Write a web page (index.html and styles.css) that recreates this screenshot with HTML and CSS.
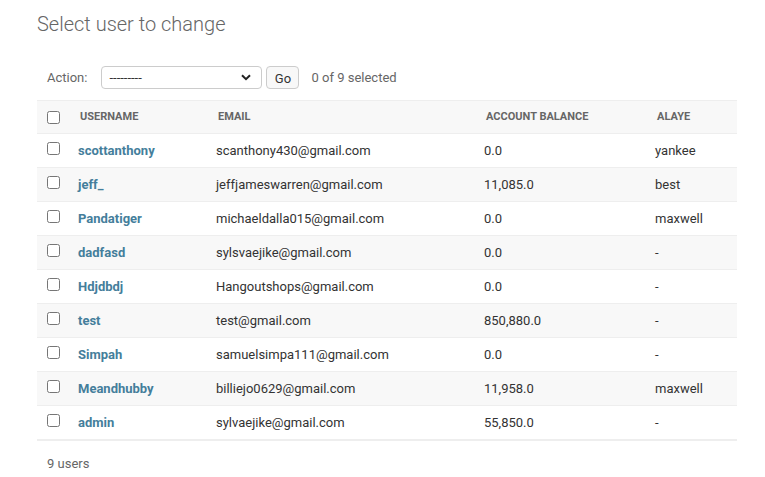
FILE: index.html
```html
<!DOCTYPE html>
<html>
<head>
<meta charset="utf-8">
<link rel="stylesheet" href="styles.css">
</head>
<body>
<div class="content">
  <h1 class="title">Select user to change</h1>
  <div class="actions">
    <label class="action-label">Action:</label>
    <div class="select-wrap">
      <select class="select"><option>---------</option></select>
      <svg class="chev" width="10" height="7" viewBox="0 0 10 7"><path d="M1 1.2 L5 5.2 L9 1.2" fill="none" stroke="#222" stroke-width="2"/></svg>
    </div>
    <button class="go">Go</button>
    <span class="counter">0 of 9 selected</span>
  </div>
  <table class="result">
    <thead>
      <tr>
        <th class="c-check"><input type="checkbox" class="cb"></th>
        <th class="c-user">Username</th>
        <th class="c-email">Email</th>
        <th class="c-bal">Account balance</th>
        <th class="c-alaye">Alaye</th>
      </tr>
    </thead>
    <tbody>
      <tr><td class="c-check"><input type="checkbox" class="cb cb-row"></td><th class="c-user"><a href="#">scottanthony</a></th><td>scanthony430@gmail.com</td><td>0.0</td><td>yankee</td></tr>
      <tr><td class="c-check"><input type="checkbox" class="cb cb-row"></td><th class="c-user"><a href="#">jeff_</a></th><td>jeffjameswarren@gmail.com</td><td>11,085.0</td><td>best</td></tr>
      <tr><td class="c-check"><input type="checkbox" class="cb cb-row"></td><th class="c-user"><a href="#">Pandatiger</a></th><td>michaeldalla015@gmail.com</td><td>0.0</td><td>maxwell</td></tr>
      <tr><td class="c-check"><input type="checkbox" class="cb cb-row"></td><th class="c-user"><a href="#">dadfasd</a></th><td>sylsvaejike@gmail.com</td><td>0.0</td><td>-</td></tr>
      <tr><td class="c-check"><input type="checkbox" class="cb cb-row"></td><th class="c-user"><a href="#">Hdjdbdj</a></th><td>Hangoutshops@gmail.com</td><td>0.0</td><td>-</td></tr>
      <tr><td class="c-check"><input type="checkbox" class="cb cb-row"></td><th class="c-user"><a href="#">test</a></th><td>test@gmail.com</td><td>850,880.0</td><td>-</td></tr>
      <tr><td class="c-check"><input type="checkbox" class="cb cb-row"></td><th class="c-user"><a href="#">Simpah</a></th><td>samuelsimpa111@gmail.com</td><td>0.0</td><td>-</td></tr>
      <tr><td class="c-check"><input type="checkbox" class="cb cb-row"></td><th class="c-user"><a href="#">Meandhubby</a></th><td>billiejo0629@gmail.com</td><td>11,958.0</td><td>maxwell</td></tr>
      <tr><td class="c-check"><input type="checkbox" class="cb cb-row"></td><th class="c-user"><a href="#">admin</a></th><td>sylvaejike@gmail.com</td><td>55,850.0</td><td>-</td></tr>
    </tbody>
  </table>
  <p class="paginator">9 users</p>
</div>
</body>
</html>
```

FILE: styles.css
```css
html, body {
  margin: 0;
  padding: 0;
  background: #fff;
}
body {
  font-family: Roboto, "Liberation Sans", Arial, sans-serif;
  color: #333;
  font-size: 13px;
}
.content {
  padding: 12px 28px 0 37px;
  width: 700px;
}
.title {
  margin: 0;
  font-size: 20px;
  font-weight: 300;
  color: #666;
  line-height: 24px;
}
.actions {
  display: flex;
  align-items: center;
  margin-top: 30px;
  padding-left: 10px;
  height: 23px;
}
.action-label {
  color: #666;
  font-size: 13px;
  margin-right: 14px;
}
.select-wrap {
  position: relative;
  width: 161px;
  height: 23px;
}
.select {
  appearance: none;
  -webkit-appearance: none;
  width: 161px;
  height: 23px;
  border: 1px solid #ccc;
  border-radius: 4px;
  background: #fff;
  font-family: Roboto, "Liberation Sans", Arial, sans-serif;
  font-size: 13px;
  color: #333;
  padding: 0 7px;
  margin: 0;
  box-sizing: border-box;
}
.chev {
  position: absolute;
  right: 11px;
  top: 8px;
  pointer-events: none;
}
.go {
  margin-left: 4px;
  height: 23px;
  width: 33px;
  box-sizing: border-box;
  border: 1px solid #ccc;
  border-radius: 4px;
  background: #f8f8f8;
  font-family: Roboto, "Liberation Sans", Arial, sans-serif;
  font-size: 13px;
  color: #333;
  padding: 2px 0 0;
}
.counter {
  margin-left: 12px;
  color: #666;
  font-size: 13px;
}
.result {
  margin-top: 11px;
  border-collapse: collapse;
  width: 700px;
  table-layout: fixed;
}
.result th, .result td {
  padding: 8px;
  line-height: 17px;
  text-align: left;
  vertical-align: middle;
  border-bottom: 1px solid #eee;
  font-size: 13px;
  white-space: nowrap;
}
.result thead th {
  background: #f8f8f8;
  border-top: 1px solid #eee;
  border-bottom: 1px solid #eee;
  font-size: 11px;
  font-weight: 700;
  text-transform: uppercase;
  color: #666;
  line-height: 16px;
  padding-left: 10px;
  padding-right: 6px;
}
.result tbody th {
  font-weight: 700;
}
.result tbody tr:nth-child(even) {
  background: #f8f8f8;
}
.result a {
  color: #447e9b;
  text-decoration: none;
}
.result .c-check,
.result thead .c-check {
  width: 23px;
  padding: 0 0 0 10px;
}
.result .c-user { width: 122px; }
.result .c-email { width: 252px; }
.result .c-bal { width: 155px; }
.result .c-alaye { width: auto; }
.cb {
  margin: 0;
  width: 13px;
  height: 13px;
  display: block;
}
.cb-row {
  margin-top: -4px;
}
.paginator {
  margin: 0;
  border-top: 1px solid #eee;
  padding: 14px 10px;
  color: #666;
  font-size: 13px;
  line-height: 17px;
}
```
